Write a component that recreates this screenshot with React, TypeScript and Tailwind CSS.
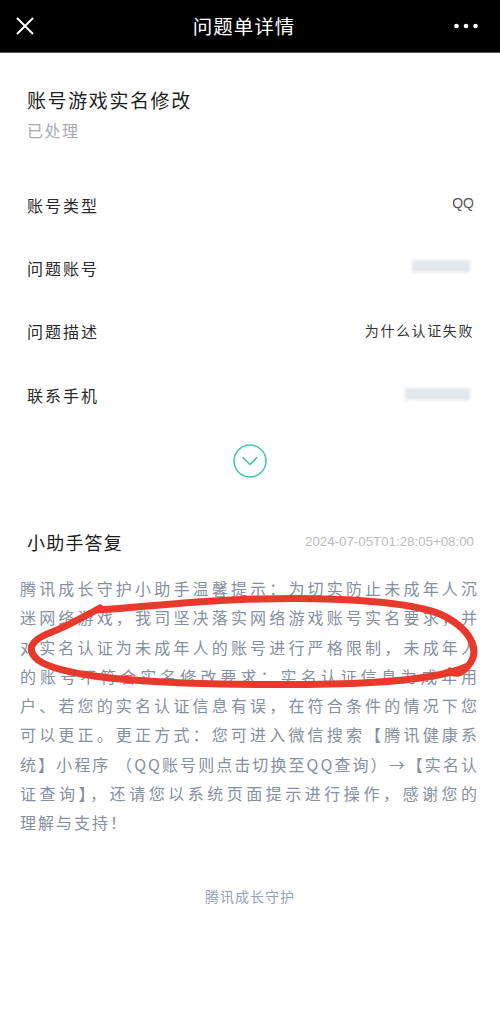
import React from "react";

const lines = [
  "腾讯成长守护小助手温馨提示：为切实防止未成年人沉",
  "迷网络游戏，我司坚决落实网络游戏账号实名要求，并",
  "对实名认证为未成年人的账号进行严格限制，未成年人",
  "的账号不符合实名修改要求：实名认证信息为成年用",
  "户、若您的实名认证信息有误，在符合条件的情况下您",
  "可以更正。更正方式：您可进入微信搜索【腾讯健康系",
  "统】小程序 （QQ账号则点击切换至QQ查询）→【实名认",
  "证查询】，还请您以系统页面提示进行操作，感谢您的",
];

function Row({ label, children }: { label: string; children: React.ReactNode }) {
  return (
    <div className="flex h-[63.3px] items-center justify-between pl-[27px] pr-[26px]">
      <span className="text-[16px] leading-[22px] tracking-[2px] text-[#2a2a2a]">{label}</span>
      {children}
    </div>
  );
}

function Blur({ w }: { w: string }) {
  return (
    <div className={`${w} h-[12px] mr-[4px] rounded-[2px] bg-[#e3e6ea] blur-[1.5px]`} />
  );
}

export default function App() {
  return (
    <div className="relative min-h-[1033px] w-[500px] overflow-hidden bg-white font-['Noto_Sans_CJK_SC','Noto_Sans',sans-serif]">
      {/* Header */}
      <div className="flex h-[53px] items-center justify-between border-b border-[#5a5a5a] bg-black px-[16px]">
        <svg width="18" height="18" viewBox="0 0 18 18">
          <path d="M1.5 1.5 L16.5 16.5 M16.5 1.5 L1.5 16.5" stroke="#fff" strokeWidth="2" strokeLinecap="round" />
        </svg>
        <div className="text-[19.5px] leading-[26px] tracking-[1px] text-white">问题单详情</div>
        <svg width="24" height="6" viewBox="0 0 24 6" className="mr-[6px]">
          <circle cx="2.5" cy="3" r="2.3" fill="#fff" />
          <circle cx="12" cy="3" r="2.3" fill="#fff" />
          <circle cx="21.5" cy="3" r="2.3" fill="#fff" />
        </svg>
      </div>

      {/* Title */}
      <div className="pl-[27px] pt-[34px]">
        <div className="text-[19px] leading-[26px] tracking-[1.6px] text-[#1e1e1e]">账号游戏实名修改</div>
        <div className="mt-[6px] text-[16px] leading-[22px] tracking-[1.5px] text-[#a9abae]">已处理</div>
      </div>

      {/* Rows */}
      <div className="mt-[32px]">
        <Row label="账号类型">
          <span className="-mt-[4px] font-['Liberation_Sans',sans-serif] text-[14px] leading-[18px] text-[#555]">QQ</span>
        </Row>
        <Row label="问题账号">
          <div className="-mt-[4px]"><Blur w="w-[58px]" /></div>
        </Row>
        <Row label="问题描述">
          <span className="-mt-[3px] text-[14px] leading-[20px] tracking-[1.6px] text-[#333]">为什么认证失败</span>
        </Row>
        <Row label="联系手机">
          <div className="-mt-[2px]"><Blur w="w-[65px]" /></div>
        </Row>
      </div>

      {/* Chevron */}
      <div className="mt-[18px] flex justify-center">
        <svg width="34" height="34" viewBox="0 0 34 34">
          <circle cx="17" cy="17" r="16" fill="none" stroke="#43c7a8" strokeWidth="1.5" />
          <path d="M10 13.5 L17 20.5 L24 13.5" fill="none" stroke="#43c7a8" strokeWidth="1.6" strokeLinecap="round" strokeLinejoin="round" />
        </svg>
      </div>

      {/* Reply header */}
      <div className="mt-[51px] flex items-center justify-between pl-[27px] pr-[26px]">
        <span className="text-[18px] leading-[26px] tracking-[1.2px] text-[#1e1e1e]">小助手答复</span>
        <span className="font-['Liberation_Sans',sans-serif] text-[13.3px] leading-[20px] text-[#bcbcbc]">2024-07-05T01:28:05+08:00</span>
      </div>

      {/* Paragraph */}
      <div className="mt-[19px] pl-[20px] pr-[21px] text-[16px] leading-[29.25px] tracking-[2px] text-[#8590a0]">
        {lines.map((l, i) => (
          <div key={i} className="whitespace-nowrap text-justify [text-align-last:justify]">{l}</div>
        ))}
        <div>理解与支持！</div>
      </div>

      {/* Footer */}
      <div className="mt-[49px] text-center text-[14px] leading-[20px] tracking-[1px] text-[#8fa3b4]">腾讯成长守护</div>

      {/* Red hand-drawn annotation */}
      <svg className="pointer-events-none absolute left-0 top-0" width="500" height="1033" viewBox="0 0 500 1033">
        <path
          d="M97 610 C150 607 200 600 260 599 C340 597 410 602 440 614 C470 628 482 650 468 666 C462 674 455 675 450 671 M468 666 C430 684 330 686 220 684 C130 682 60 676 38 660 C26 650 30 640 52 632 C70 625 85 616 100 608"
          fill="none"
          stroke="#e83a2c"
          strokeWidth="7"
          strokeLinecap="round"
          strokeLinejoin="round"
        />
      </svg>
    </div>
  );
}
